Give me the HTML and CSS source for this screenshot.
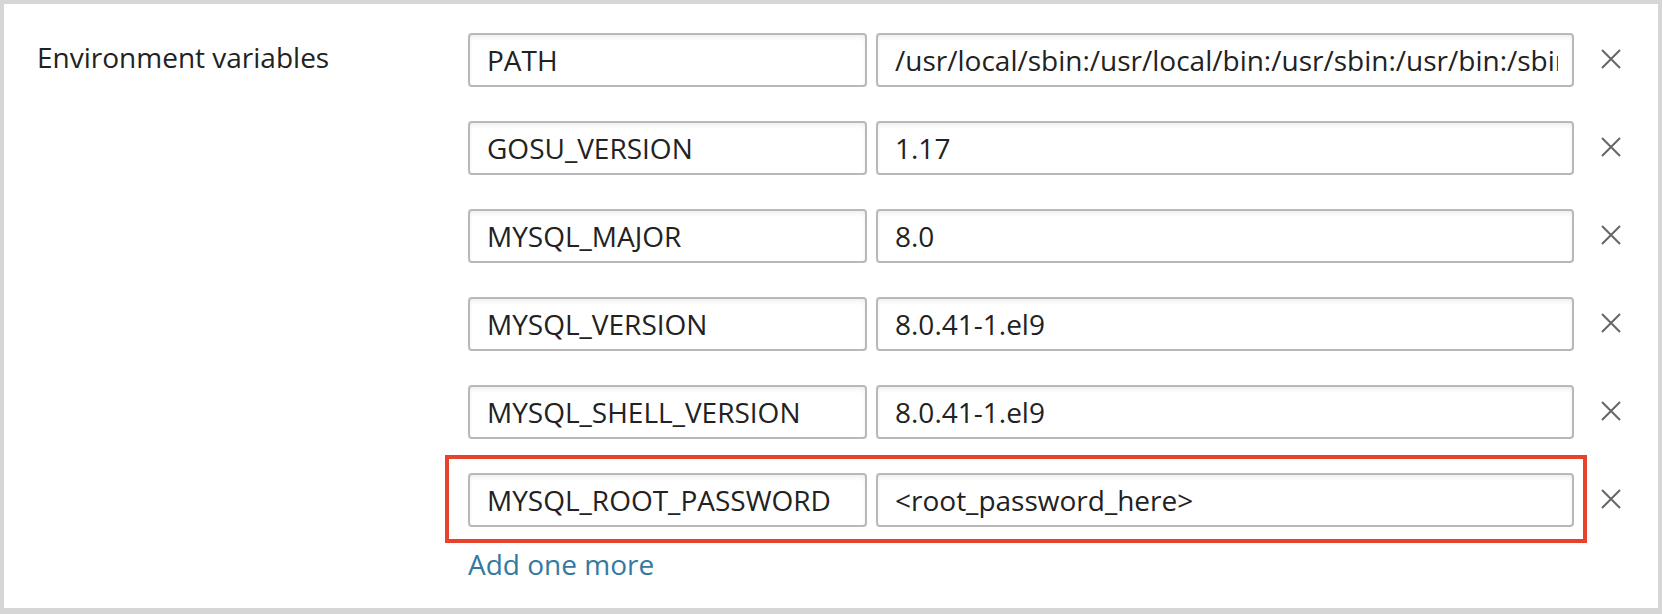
FILE: index.html
```html
<!DOCTYPE html>
<html lang="en">
<head>
    <meta charset="UTF-8">
    <meta name="viewport" content="width=device-width, initial-scale=1.0">
    <title>Environment variables</title>
    <link rel="stylesheet" href="styles.css">
</head>
<body>
    <div class="panel">
        <div class="field-label">Environment variables</div>

        <div class="env-list">
            <div class="env-row">
                <div class="env-pair">
                    <input class="env-key" type="text" value="PATH">
                    <input class="env-value" type="text" value="/usr/local/sbin:/usr/local/bin:/usr/sbin:/usr/bin:/sbin:/bin">
                </div>
                <button class="remove-btn" title="Remove">
                    <svg viewBox="0 0 22 22" width="22" height="22"><path d="M2 2L20 20M20 2L2 20"/></svg>
                </button>
            </div>

            <div class="env-row">
                <div class="env-pair">
                    <input class="env-key" type="text" value="GOSU_VERSION">
                    <input class="env-value" type="text" value="1.17">
                </div>
                <button class="remove-btn" title="Remove">
                    <svg viewBox="0 0 22 22" width="22" height="22"><path d="M2 2L20 20M20 2L2 20"/></svg>
                </button>
            </div>

            <div class="env-row">
                <div class="env-pair">
                    <input class="env-key" type="text" value="MYSQL_MAJOR">
                    <input class="env-value" type="text" value="8.0">
                </div>
                <button class="remove-btn" title="Remove">
                    <svg viewBox="0 0 22 22" width="22" height="22"><path d="M2 2L20 20M20 2L2 20"/></svg>
                </button>
            </div>

            <div class="env-row">
                <div class="env-pair">
                    <input class="env-key" type="text" value="MYSQL_VERSION">
                    <input class="env-value" type="text" value="8.0.41-1.el9">
                </div>
                <button class="remove-btn" title="Remove">
                    <svg viewBox="0 0 22 22" width="22" height="22"><path d="M2 2L20 20M20 2L2 20"/></svg>
                </button>
            </div>

            <div class="env-row">
                <div class="env-pair">
                    <input class="env-key" type="text" value="MYSQL_SHELL_VERSION">
                    <input class="env-value" type="text" value="8.0.41-1.el9">
                </div>
                <button class="remove-btn" title="Remove">
                    <svg viewBox="0 0 22 22" width="22" height="22"><path d="M2 2L20 20M20 2L2 20"/></svg>
                </button>
            </div>

            <!-- highlighted row -->
            <div class="env-row">
                <div class="env-pair highlight">
                    <input class="env-key" type="text" value="MYSQL_ROOT_PASSWORD">
                    <input class="env-value" type="text" value="<root_password_here>">
                </div>
                <button class="remove-btn" title="Remove">
                    <svg viewBox="0 0 22 22" width="22" height="22"><path d="M2 2L20 20M20 2L2 20"/></svg>
                </button>
            </div>

            <a class="add-link" href="#">Add one more</a>
        </div>
    </div>
</body>
</html>
```

FILE: styles.css
```css
html, body {
    margin: 0;
    padding: 0;
    background-color: #fff;
}
body {
    font-family: "Open Sans", Arial, sans-serif;
    color: #222;
    width: 1662px;
    height: 614px;
    overflow: hidden;
}
.panel {
    box-sizing: border-box;
    height: 614px;
    border: 4px solid #d6d6d6;
    border-bottom-width: 6px;
    display: flex;
    padding-top: 11px;
}
.field-label {
    width: 441px;
    box-sizing: border-box;
    padding-left: 33px;
    padding-top: 23px;
    font-size: 28px;
    line-height: 38px;
}
.env-list {
    display: flex;
    flex-direction: column;
    align-items: flex-start;
}
.env-row {
    display: flex;
    align-items: center;
}
.env-pair {
    display: flex;
    gap: 9px;
    padding: 14px 9px 12px 19px;
    border: 4px solid transparent;
}
.env-pair.highlight {
    border-color: #e8432a;
}
.env-key, .env-value {
    box-sizing: border-box;
    height: 54px;
    padding: 0 14px 0 17px;
    font-family: "Open Sans", Arial, sans-serif;
    font-size: 28px;
    color: #222;
    border: 2px solid #b8b8b8;
    border-radius: 4px;
    box-shadow: inset 0 3px 4px rgba(0, 0, 0, 0.06);
    outline: none;
}
.env-key {
    width: 399px;
}
.env-value {
    width: 698px;
}
.remove-btn {
    margin-left: 13px;
    width: 22px;
    height: 22px;
    padding: 0;
    border: none;
    background: none;
    cursor: pointer;
}
.remove-btn svg {
    display: block;
    stroke: #666;
    stroke-width: 2;
    fill: none;
}
.add-link {
    margin-top: 2px;
    margin-left: 23px;
    font-size: 28px;
    line-height: 38px;
    color: #3479a0;
    text-decoration: none;
}
```
